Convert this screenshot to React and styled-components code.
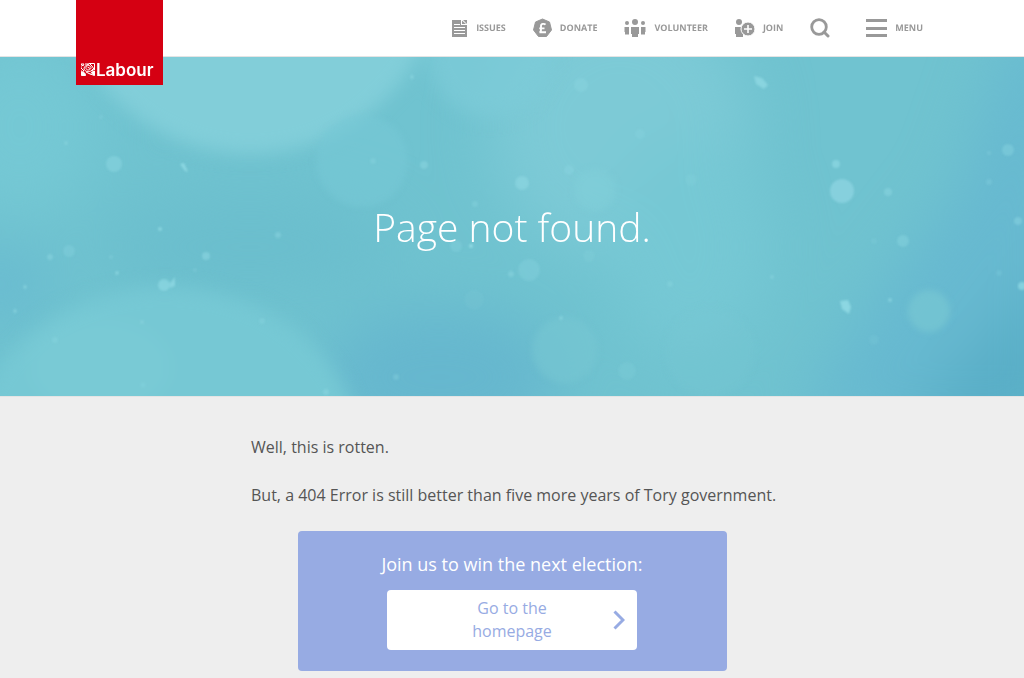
import React from 'react';
import styled, { createGlobalStyle } from 'styled-components';

const GlobalStyle = createGlobalStyle`
  *, *::before, *::after {
    box-sizing: border-box;
  }

  body {
    margin: 0;
    background: #eee;
    color: #555;
    font-family: 'Open Sans', 'Noto Sans', sans-serif;
    font-size: 16px;
    line-height: 24px;
  }
`;

const Header = styled.header`
  position: relative;
  z-index: 1;
  height: 57px;
  padding: 0 76px;
  display: flex;
  align-items: flex-start;
  justify-content: space-between;
  background: #fff;
  border-bottom: 1px solid #e4e4e4;
`;

const Logo = styled.a`
  flex: none;
  width: 87px;
  height: 85px;
  padding: 0 5px 5px;
  display: flex;
  align-items: flex-end;
  gap: 1px;
  background: #d50012;
  color: #fff;
  text-decoration: none;

  svg {
    flex: none;
    margin-bottom: 4px;
  }
`;

const LogoName = styled.span`
  font-family: Inter, 'Liberation Sans', sans-serif;
  font-size: 17px;
  font-weight: 600;
  line-height: 20px;
`;

const Nav = styled.nav`
  height: 56px;
  padding-right: 25px;
  display: flex;
  align-items: center;
  gap: 27px;
  text-rendering: geometricPrecision;
`;

const NavLink = styled.a`
  display: flex;
  align-items: center;
  gap: 8px;
  color: #999;
  font-size: 9px;
  font-weight: 700;
  line-height: 12px;
  text-decoration: none;
  text-transform: uppercase;
`;

const NavButton = styled.button`
  margin: 0 0 0 ${(props) => (props.$spaced ? '9px' : '0')};
  padding: 0;
  display: flex;
  align-items: center;
  gap: 8px;
  border: 0;
  background: none;
  color: #999;
  font-family: inherit;
  font-size: 9px;
  font-weight: 700;
  line-height: 12px;
  text-rendering: inherit;
  text-transform: uppercase;
  cursor: pointer;
`;

const Hero = styled.section`
  position: relative;
  min-height: 340px;
  display: flex;
  align-items: center;
  justify-content: center;
  background: #70c3d0;
  border-bottom: 1px solid #e4e4e4;
`;

const HeroArt = styled.svg`
  position: absolute;
  inset: 0;
  width: 100%;
  height: 100%;
`;

const Title = styled.h1`
  position: relative;
  margin: 0;
  color: #fff;
  font-size: 39px;
  font-weight: 300;
  line-height: 56px;
`;

const Content = styled.main`
  max-width: 522px;
  margin: 0 auto;
  padding: 38px 0 8px;
`;

const Text = styled.p`
  margin: 0 0 24px;

  @media (min-width: 600px) {
    white-space: nowrap;
  }
`;

const JoinBox = styled.section`
  max-width: 429px;
  margin: 0 auto;
  padding: 21px 24px;
  display: flex;
  flex-direction: column;
  align-items: center;
  gap: 13px;
  background: #97abe3;
  border-radius: 4px;
`;

const JoinTitle = styled.h2`
  margin: 0;
  color: #fff;
  font-size: 18px;
  font-weight: 400;
  line-height: 25px;
`;

const HomeLink = styled.a`
  width: 250px;
  padding: 7px 12px;
  display: grid;
  grid-template-columns: 1fr 86px 1fr;
  align-items: center;
  background: #fff;
  border-radius: 4px;
  color: #97abe3;
  line-height: 23px;
  text-align: center;
  text-decoration: none;

  span {
    grid-column: 2;
  }

  svg {
    justify-self: end;
  }
`;

// [x, y, radius, opacity]
const specks = [
  [114, 107, 8, 0.4],
  [101, 60, 2, 0.3],
  [66, 86, 2, 0.4],
  [69, 194, 6, 0.25],
  [50, 200, 3, 0.4],
  [25, 230, 2, 0.5],
  [15, 254, 2, 0.5],
  [117, 216, 2, 0.6],
  [111, 200, 2, 0.3],
  [160, 172, 2, 0.7],
  [206, 199, 4, 0.5],
  [195, 213, 2, 0.3],
  [142, 265, 2, 0.4],
  [262, 264, 3, 0.3],
  [55, 283, 3, 0.3],
  [143, 328, 3, 0.2],
  [326, 335, 3, 0.4],
  [396, 320, 3, 0.3],
  [164, 228, 6, 0.6],
  [278, 178, 3, 0.4],
  [373, 104, 3, 0.3],
  [424, 108, 4, 0.4],
  [412, 20, 2, 0.5],
  [475, 147, 3, 0.3],
  [456, 189, 6, 0.25],
  [471, 189, 2, 0.9],
  [511, 217, 3, 0.4],
  [474, 243, 10, 0.1],
  [522, 126, 7, 0.5],
  [529, 213, 11, 0.25],
  [589, 199, 6, 0.15],
  [561, 261, 2, 0.5],
  [581, 28, 7, 0.3],
  [569, 113, 5, 0.25],
  [640, 77, 5, 0.2],
  [691, 123, 6, 0.15],
  [627, 314, 9, 0.15],
  [670, 227, 3, 0.3],
  [772, 220, 2, 0.4],
  [836, 107, 4, 0.6],
  [888, 135, 4, 0.4],
  [903, 184, 6, 0.35],
  [874, 184, 3, 0.15],
  [890, 243, 2, 0.6],
  [874, 283, 5, 0.12],
  [989, 96, 2, 0.3],
  [1008, 93, 6, 0.35],
  [989, 125, 3, 0.25],
  [1018, 164, 4, 0.4],
  [1022, 229, 4, 0.7],
  [999, 216, 3, 0.2],
];

function HeroBackground() {
  return (
    <HeroArt
      viewBox="0 0 1024 339"
      preserveAspectRatio="xMidYMid slice"
      colorInterpolationFilters="sRGB"
      aria-hidden="true"
    >
      <defs>
        <filter id="haze" x="-50%" y="-50%" width="200%" height="200%">
          <feGaussianBlur stdDeviation="30" />
        </filter>
        <filter id="soft" x="-30%" y="-30%" width="160%" height="160%">
          <feGaussianBlur stdDeviation="9" />
        </filter>
        <filter id="edge" x="-30%" y="-30%" width="160%" height="160%">
          <feGaussianBlur stdDeviation="3" />
        </filter>
        <filter id="speck" x="-50%" y="-50%" width="200%" height="200%">
          <feGaussianBlur stdDeviation="1" />
        </filter>
      </defs>
      <rect width="1024" height="339" fill="#70c3d0" />
      <g filter="url(#haze)">
        <ellipse cx="20" cy="70" rx="80" ry="90" fill="#75c8d4" />
        <ellipse cx="620" cy="70" rx="130" ry="130" fill="#7dcad6" />
        <ellipse cx="690" cy="190" rx="80" ry="110" fill="#76c8d4" />
        <ellipse cx="250" cy="190" rx="150" ry="50" fill="#6bbecd" />
        <ellipse cx="0" cy="228" rx="50" ry="40" fill="#69bbd0" />
        <ellipse cx="440" cy="320" rx="120" ry="70" fill="#66b7ce" />
        <path d="M1060 -30V370H790L860 260L960 130L1015 -30Z" fill="#67b9d0" />
        <path d="M1060 200V380H890L980 290Z" fill="#58adc6" />
      </g>
      <g filter="url(#soft)">
        <circle cx="250" cy="-95" r="192" fill="#82ced9" />
        <circle cx="490" cy="-2" r="62" fill="#7dccd8" opacity="0.7" />
        <ellipse cx="165" cy="390" rx="192" ry="160" fill="#76c8d4" />
        <ellipse cx="100" cy="310" rx="70" ry="48" fill="#7bcad6" opacity="0.7" />
      </g>
      <g filter="url(#edge)">
        <circle cx="362" cy="104" r="46" fill="#77c8d5" opacity="0.6" />
        <circle cx="565" cy="293" r="33" fill="#76c7d2" opacity="0.6" />
        <circle cx="595" cy="133" r="21" fill="#82cfda" opacity="0.5" />
        <circle cx="929" cy="254" r="21" fill="#76c6d2" opacity="0.8" />
        <circle cx="710" cy="295" r="45" fill="#77c8d3" opacity="0.25" />
      </g>
      <circle cx="842" cy="134" r="12" fill="#86d0dd" filter="url(#speck)" />
      <g fill="#93dce6" filter="url(#speck)">
        {specks.map(([x, y, r, opacity]) => (
          <circle key={`${x}-${y}`} cx={x} cy={y} r={r} opacity={opacity} />
        ))}
        <path d="M180 107L184 106L188 115L185 114Z" opacity="0.8" />
        <path d="M170 226L175 220L175 229L170 231Z" opacity="0.7" />
        <path d="M754 19L762 21L768 28L764 32L756 27Z" opacity="0.7" />
        <path d="M840 244L848 243L851 250L849 257L842 252Z" opacity="0.8" />
      </g>
    </HeroArt>
  );
}

function RoseIcon() {
  return (
    <svg width="14" height="13" viewBox="0 0 14 13" fill="none" stroke="#fff" aria-hidden="true">
      <path d="M0 1H3L2 3L0 1V5L3 8M0 7V9H3M4 1H8L6 2M8 .5H13.500V7L11 3L9 1" />
      <path d="M6 3C4 4 5 7 7 7C10 7 11 4 9 3C6 1 3 3 3 6C4 9 8 9 10 8L13 5" />
      <path d="M6.500 4L9 5.500M11 8L13.500 6" />
      <path d="M.5 9V12.500H4.500C4.500 10 3 9 .5 9ZM5 9L9 11L13.500 12.500V8L10 9.500L13 12" fill="#fff" />
    </svg>
  );
}

function IssuesIcon() {
  return (
    <svg width="17" height="18" viewBox="0 0 17 18" aria-hidden="true">
      <path d="M1 1H16V18H1Z" fill="#999" />
      <path d="M10 1H12L16 5V6H10Z" fill="#fff" />
      <path d="M11 1.500L15 5H11Z" fill="#999" />
      <path d="M3 5.500H9M3 8.500H14M3 11.500H14M3 14.500H14" stroke="#fff" strokeWidth="1.200" />
    </svg>
  );
}

function DonateIcon() {
  return (
    <svg width="19" height="20" viewBox="0 0 19 20" aria-hidden="true">
      <path
        d="M9.500 1L16.500 4L18.500 12L13.500 18.500H5.500L.5 12L2.500 4Z"
        fill="#999"
        stroke="#999"
        strokeLinejoin="round"
      />
      <path
        d="M12.500 6.700C11.500 5.500 8 5.400 8 8V11.500C8 13 7.500 14 6.500 14.200H13M6.300 10.400H11.500"
        fill="none"
        stroke="#fff"
        strokeWidth="1.900"
      />
    </svg>
  );
}

function VolunteerIcon() {
  return (
    <svg width="22" height="20" viewBox="0 0 22 20" fill="#999" aria-hidden="true">
      <circle cx="11" cy="4" r="3" />
      <circle cx="3" cy="5" r="2" />
      <circle cx="19" cy="5" r="2" />
      <path d="M7 9H15V16H14V19H8V16H7Z" />
      <path d="M0.500 9H5V16.500H1V14H0.500ZM17 9H21.500V14H21V16.500H17Z" />
    </svg>
  );
}

function JoinIcon() {
  return (
    <svg width="20" height="20" viewBox="0 0 20 20" aria-hidden="true">
      <circle cx="4" cy="4" r="3" fill="#999" />
      <path d="M0 9H8V19H1V16H0Z" fill="#999" />
      <circle cx="13" cy="11" r="7" fill="#999" stroke="#fff" />
      <path d="M13 7V15M9 11H17" stroke="#fff" strokeWidth="1.600" />
    </svg>
  );
}

function SearchIcon() {
  return (
    <svg width="20" height="20" viewBox="0 0 20 20" fill="none" stroke="#999" aria-hidden="true">
      <circle cx="9" cy="9" r="7.300" strokeWidth="2.800" />
      <path d="M14 14L18 18" strokeWidth="3" strokeLinecap="round" />
    </svg>
  );
}

function MenuIcon() {
  return (
    <svg width="21" height="20" viewBox="0 0 21 20" fill="#999" aria-hidden="true">
      <path d="M0 1H21V4H0ZM0 9H21V12H0ZM0 16H21V19H0Z" />
    </svg>
  );
}

function ChevronIcon() {
  return (
    <svg width="12" height="20" viewBox="0 0 12 20" fill="none" aria-hidden="true">
      <path d="M1.500 1.500L10 10L1.500 18.500" stroke="#97abe3" strokeWidth="3" />
    </svg>
  );
}

function App() {
  return (
    <>
      <GlobalStyle />
      <Header>
        <Logo href="#home">
          <RoseIcon />
          <LogoName>Labour</LogoName>
        </Logo>
        <Nav>
          <NavLink href="#issues">
            <IssuesIcon />
            Issues
          </NavLink>
          <NavLink href="#donate">
            <DonateIcon />
            Donate
          </NavLink>
          <NavLink href="#volunteer">
            <VolunteerIcon />
            Volunteer
          </NavLink>
          <NavLink href="#join">
            <JoinIcon />
            Join
          </NavLink>
          <NavButton type="button" aria-label="Search">
            <SearchIcon />
          </NavButton>
          <NavButton type="button" $spaced>
            <MenuIcon />
            Menu
          </NavButton>
        </Nav>
      </Header>
      <Hero>
        <HeroBackground />
        <Title>Page not found.</Title>
      </Hero>
      <Content>
        <Text>Well, this is rotten.</Text>
        <Text>But, a 404 Error is still better than five more years of Tory government.</Text>
        <JoinBox>
          <JoinTitle>Join us to win the next election:</JoinTitle>
          <HomeLink href="#home">
            <span>Go to the homepage</span>
            <ChevronIcon />
          </HomeLink>
        </JoinBox>
      </Content>
    </>
  );
}

export default App;
